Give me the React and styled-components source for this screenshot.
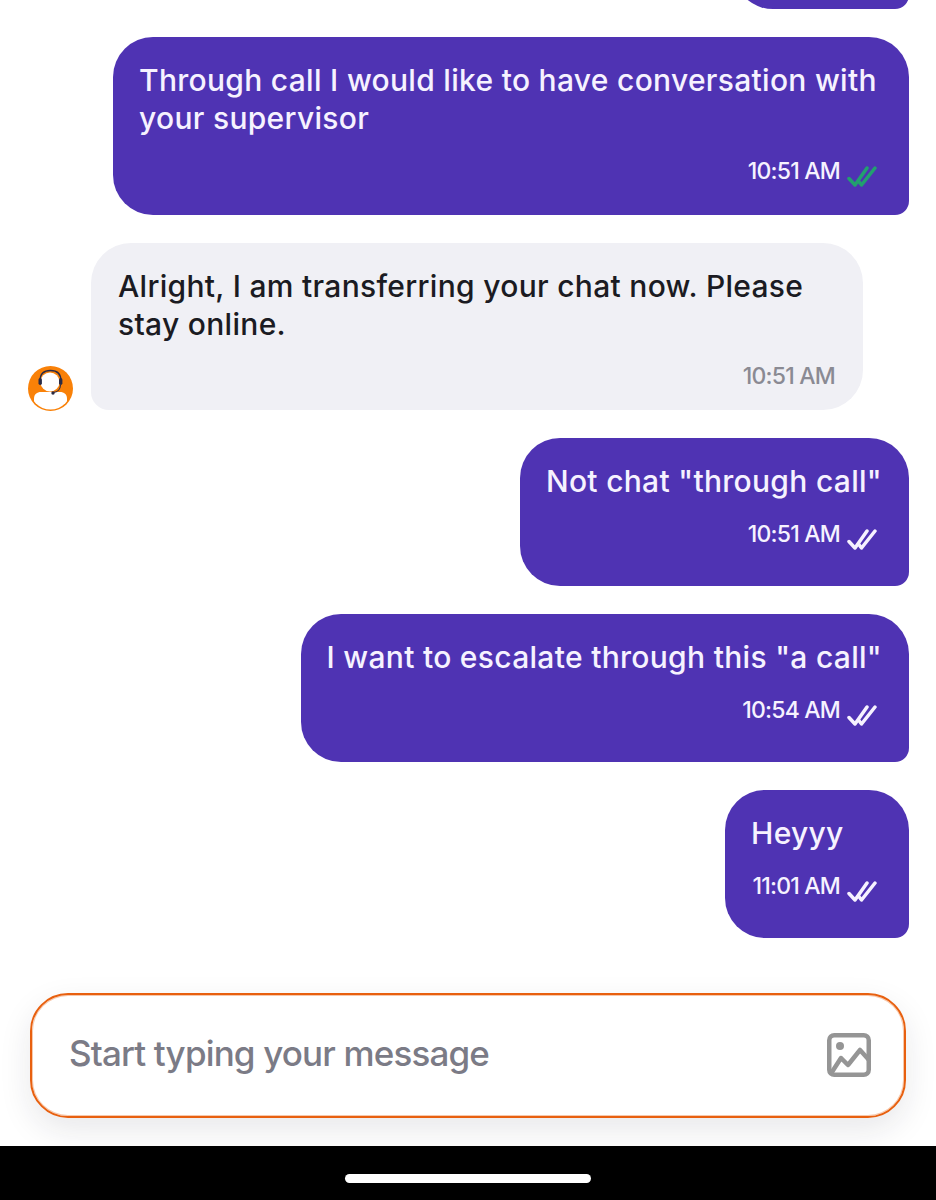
import React from "react";
import styled, { createGlobalStyle } from "styled-components";

const GlobalStyle = createGlobalStyle`
  html, body {
    margin: 0;
    padding: 0;
    background: #fff;
  }
  * {
    box-sizing: border-box;
  }
`;

const Page = styled.div`
  height: 1200px;
  display: flex;
  flex-direction: column;
  overflow: hidden;
  background: #fff;
  font-family: "Inter", "Liberation Sans", sans-serif;
`;

const ChatList = styled.div`
  flex: 1;
  min-height: 0;
  display: flex;
  flex-direction: column;
  justify-content: flex-end;
  gap: 28px;
  padding: 0 27px 55px 28px;
  overflow: hidden;
`;

const Row = styled.div`
  flex-shrink: 0;
  display: flex;
  align-items: flex-end;
  justify-content: ${(p) => (p.$incoming ? "flex-start" : "flex-end")};
  gap: 18px;
`;

const Bubble = styled.div`
  width: ${(p) => p.$width || "fit-content"};
  min-width: ${(p) => (p.$incoming ? "0" : "176px")};
  max-width: ${(p) => (p.$incoming ? "772px" : "796px")};
  min-height: ${(p) => (p.$incoming ? "auto" : "148px")};
  padding: ${(p) => (p.$incoming ? "24px 28px 19px 27px" : "24px 27px 29px 26px")};
  border-radius: ${(p) => (p.$incoming ? "40px 40px 40px 18px" : "40px 40px 14px 40px")};
  background: ${(p) => (p.$incoming ? "#f0f0f5" : "#4f33b3")};
  color: ${(p) => (p.$incoming ? "#1b1b22" : "#f6f2ff")};
`;

const Text = styled.div`
  font-size: 30px;
  font-weight: 500;
  line-height: 38px;
  letter-spacing: 0.3px;
`;

const Meta = styled.div`
  display: flex;
  align-items: center;
  justify-content: flex-end;
  gap: 7px;
  height: 30px;
  margin-top: ${(p) => (p.$incoming ? "18px" : "19px")};
  padding-right: ${(p) => (p.$incoming ? "0" : "5px")};
`;

const Time = styled.span`
  font-size: 23px;
  font-weight: 500;
  letter-spacing: -0.8px;
  color: ${(p) => (p.$incoming ? "#8a8a93" : "#f6f2ff")};
`;

const TickIcon = styled.svg`
  width: 30px;
  height: 22px;
  margin-top: 12px;
  fill: none;
  stroke: ${(p) => (p.$read ? "#22a06f" : "#f6f2ff")};
  stroke-width: 3.5;
  stroke-linecap: round;
  stroke-linejoin: round;
`;

const Avatar = styled.svg`
  flex-shrink: 0;
  width: 45px;
  height: 45px;
  margin-bottom: -1px;
`;

const Composer = styled.div`
  flex-shrink: 0;
  display: flex;
  align-items: center;
  justify-content: space-between;
  height: 125px;
  margin: 0 30px 28px;
  padding: 0 33px 0 37px;
  border: 2px solid #e8600f;
  border-radius: 38px;
  background: #fff;
  box-shadow: inset 0 0 0 1px rgba(232, 96, 15, 0.35), 0 12px 32px rgba(30, 30, 50, 0.1);
`;

const Placeholder = styled.span`
  padding-bottom: 6px;
  font-size: 35px;
  font-weight: 500;
  letter-spacing: -0.85px;
  color: #7b7b86;
`;

const ImageIcon = styled.svg`
  width: 44px;
  height: 44px;
  margin-bottom: 2px;
  fill: none;
  stroke: #959595;
  stroke-width: 4.5;
  stroke-linecap: round;
  stroke-linejoin: round;
`;

const NavBar = styled.div`
  flex-shrink: 0;
  display: flex;
  justify-content: center;
  height: 54px;
  padding-top: 28px;
  background: #000;
`;

const HomeHandle = styled.div`
  width: 246px;
  height: 9px;
  border-radius: 5px;
  background: #fff;
`;

function Ticks({ read }) {
  return (
    <TickIcon $read={read} viewBox="0 0 30 22">
      <path d="M2 12.5 8 19 20 2" />
      <path d="M11.5 15l3 4L28 2" />
    </TickIcon>
  );
}

function AgentAvatar() {
  return (
    <Avatar viewBox="0 0 45 45">
      <defs>
        <clipPath id="avatarClip">
          <circle cx="22.5" cy="22.5" r="21" />
        </clipPath>
      </defs>
      <circle cx="22.5" cy="22.5" r="22.5" fill="#f98108" />
      <g clipPath="url(#avatarClip)">
        <path d="M6 45V33c0-5 3-7 7-7h19c4 0 7 2 7 7v12z" fill="#fff" />
      </g>
      <circle cx="22" cy="16" r="9.5" fill="#fff" />
      <path d="M12 15C12 8 16 4.5 22.5 4.5S33 8 33 15" fill="none" stroke="#2b2b45" strokeWidth="1.3" />
      <rect x="10.5" y="12" width="3.4" height="7" rx="1.7" fill="#2b2b45" />
      <rect x="31" y="12" width="3.4" height="7" rx="1.7" fill="#2b2b45" />
      <path d="M32.5 19c0 4-3 7-7 7.5" fill="none" stroke="#2b2b45" strokeWidth="1.1" />
      <circle cx="25" cy="27" r="1.7" fill="#2b2b45" />
    </Avatar>
  );
}

function SentMessage({ text, time, read, width }) {
  return (
    <Row>
      <Bubble $width={width}>
        <Text>{text}</Text>
        <Meta>
          <Time>{time}</Time>
          <Ticks read={read} />
        </Meta>
      </Bubble>
    </Row>
  );
}

export default function App() {
  return (
    <>
      <GlobalStyle />
      <Page>
        <ChatList>
          <Row>
            <Bubble $width="176px" />
          </Row>
          <SentMessage
            text="Through call I would like to have conversation with your supervisor"
            time="10:51 AM"
            read
          />
          <Row $incoming>
            <AgentAvatar />
            <Bubble $incoming>
              <Text>Alright, I am transferring your chat now. Please stay online.</Text>
              <Meta $incoming>
                <Time $incoming>10:51 AM</Time>
              </Meta>
            </Bubble>
          </Row>
          <SentMessage text={'Not chat "through call"'} time="10:51 AM" />
          <SentMessage text={'I want to escalate through this "a call"'} time="10:54 AM" />
          <SentMessage text="Heyyy" time="11:01 AM" width="184px" />
        </ChatList>
        <Composer>
          <Placeholder>Start typing your message</Placeholder>
          <ImageIcon viewBox="0 0 44 44">
            <rect x="2.25" y="2.25" width="39.5" height="39.5" rx="5" />
            <circle cx="13" cy="13" r="4" fill="#959595" stroke="none" />
            <path d="M5 39l9-14 7 7 12-15 9 10" />
          </ImageIcon>
        </Composer>
        <NavBar>
          <HomeHandle />
        </NavBar>
      </Page>
    </>
  );
}
